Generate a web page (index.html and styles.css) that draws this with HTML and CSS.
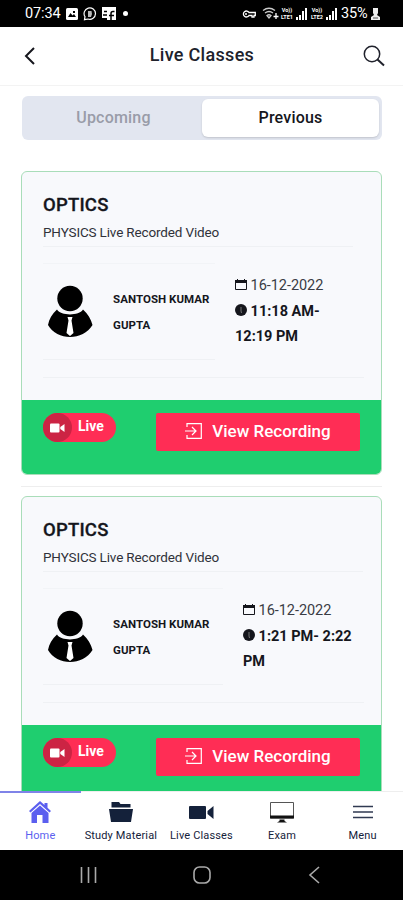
FILE: index.html
```html
<!DOCTYPE html>
<html lang="en">
<head>
    <meta charset="UTF-8">
    <meta name="viewport" content="width=device-width, initial-scale=1.0">
    <title>Live Classes</title>
    <link rel="stylesheet" href="styles.css">
</head>
<body>

    <!-- icons used more than once -->
    <svg class="sprite" width="0" height="0">
        <symbol id="person" viewBox="0 0 46 54">
            <circle cx="23" cy="13.5" r="12.7"/>
            <path d="M10 24.5C14 31 32 31 36 24.5C41 29 44 34 45.5 40C36 56 10 56 1 40C2 34 5 29 10 24.5Z"/>
            <path d="M20.5 32h5l-1 3.500 2 12.500-3.500 3-3.500-3 2-12.500z" fill="#fff"/>
        </symbol>
        <symbol id="calendar" viewBox="0 0 12 11">
            <path d="M.5 1.500h11v9H.5z" fill="none" stroke="currentColor"/>
            <path d="M0 1h12v3H0zM2 0h1v2H2zM9 0h1v2H9z"/>
        </symbol>
        <symbol id="clock" viewBox="0 0 12 12">
            <circle cx="6" cy="6" r="6"/>
            <path d="M6 3v4l.5 2" fill="none" stroke="#777"/>
        </symbol>
        <symbol id="camera" viewBox="0 0 15 10">
            <rect x="0" y="0.5" width="9.5" height="9" rx="1"/>
            <path d="M10.300 4L14.500 1v8l-4.200-3z"/>
        </symbol>
        <symbol id="enter" viewBox="0 0 17 16">
            <path d="M2 4V.7h14.300v14.600H2V12M0 8h11M7 4l4 4-4 4" fill="none" stroke="currentColor" stroke-width="1.200"/>
        </symbol>
        <symbol id="signal" viewBox="0 0 11 12">
            <path d="M0 9h2v3H0zM3 7h2v5H3zM6 3h2v9H6zM9 0h2v12H9z"/>
        </symbol>
    </svg>

    <div class="status-bar">
        <div class="status-left">
            <span class="time">07:34</span>
            <svg width="12" height="12" viewBox="0 0 12 12"><rect width="12" height="12" rx="1.5" fill="#fff"/><path d="M2 9l2.500-4 2 2.500L8 6l2 3zM7 3h2v2H7z" fill="#000"/></svg>
            <svg width="14" height="14" viewBox="0 0 14 14"><path d="M1.500 12.700l.5-3A5.700 5.700 0 1 1 5 12z" fill="none" stroke="#fff" stroke-width="1.200"/><path d="M5 4h3.500L9 7l-1 3H5z" fill="#bbb"/></svg>
            <svg width="14" height="14" viewBox="0 0 14 14"><path d="M0 0h14v13H5v-2H0z" fill="#fff"/><path d="M12.500 4.500H11Q9 4.500 9 6.500V13M7 8.500h5M2 4.500h3M1 8h4" fill="none" stroke="#000" stroke-width="1.500"/></svg>
            <span class="dot"></span>
        </div>
        <div class="status-right">
            <svg class="key" width="14" height="8" viewBox="0 0 14 8"><path d="M7 2.500A3 3 0 1 0 7 5.500h3V7h2V5.500h1.300v-3z" fill="none" stroke="#fff" stroke-width="1.300"/><circle cx="4" cy="4" r="1" fill="#fff"/></svg>
            <svg width="17" height="13" viewBox="0 0 17 13"><path d="M1 3.500Q7 -1 13 3.500M3 6Q7 3 11 6M5 8.500Q7 7 9 8.500L7 11z" fill="none" stroke="#ccc" stroke-width="1.300"/><path d="M14 6v6M11.500 9.500h5" stroke="#fff" stroke-width="1.300"/></svg>
            <span class="lte"><span>Vo))</span><span>LTE1</span></span>
            <svg class="bars" width="11" height="12"><use href="#signal"/></svg>
            <span class="lte"><span>Vo))</span><span>LTE2</span></span>
            <svg class="bars" width="11" height="12"><use href="#signal"/></svg>
            <span class="percent">35%</span>
            <svg width="9" height="12" viewBox="0 0 9 12"><path d="M2 0h5v5L6 7l3 2v3H0V9l3-2-1-2z" fill="#eee"/><path d="M2 10h5" stroke="#555"/></svg>
        </div>
    </div>

    <header>
        <svg width="12" height="18" viewBox="0 0 12 18"><path d="M10 1L2 9l8 8" fill="none" stroke="#15161c" stroke-width="2"/></svg>
        <h1>Live Classes</h1>
        <svg width="22" height="22" viewBox="0 0 22 22"><circle cx="9" cy="9" r="7.700" fill="none" stroke="#20222c" stroke-width="1.500"/><path d="M14.500 14.500l6.500 6" stroke="#20222c" stroke-width="2"/></svg>
    </header>

    <main>
        <div class="tabs">
            <button class="tab">Upcoming</button>
            <button class="tab active">Previous</button>
        </div>

        <div class="card">
            <div class="card-body">
                <h2>OPTICS</h2>
                <p class="subject">PHYSICS Live Recorded Video</p>
                <div class="details">
                    <div class="teacher">
                        <svg class="avatar" width="46" height="54"><use href="#person"/></svg>
                        <span class="name">SANTOSH KUMAR GUPTA</span>
                    </div>
                    <div class="schedule">
                        <div><svg width="12" height="11"><use href="#calendar"/></svg> <span class="date">16-12-2022</span></div>
                        <div class="hours"><svg width="12" height="12"><use href="#clock"/></svg> 11:18 AM-<br>12:19 PM</div>
                    </div>
                </div>
            </div>
            <div class="card-footer">
                <span class="live"><span class="live-icon"><svg width="15" height="10"><use href="#camera"/></svg></span>Live</span>
                <button class="view"><svg width="17" height="16"><use href="#enter"/></svg>View Recording</button>
            </div>
        </div>

        <hr>

        <div class="card">
            <div class="card-body">
                <h2>OPTICS</h2>
                <p class="subject wide">PHYSICS Live Recorded Video</p>
                <div class="details">
                    <div class="teacher wide">
                        <svg class="avatar" width="46" height="54"><use href="#person"/></svg>
                        <span class="name">SANTOSH KUMAR GUPTA</span>
                    </div>
                    <div class="schedule">
                        <div><svg width="12" height="11"><use href="#calendar"/></svg> <span class="date">16-12-2022</span></div>
                        <div class="hours"><svg width="12" height="12"><use href="#clock"/></svg> 1:21 PM- 2:22<br>PM</div>
                    </div>
                </div>
            </div>
            <div class="card-footer">
                <span class="live"><span class="live-icon"><svg width="15" height="10"><use href="#camera"/></svg></span>Live</span>
                <button class="view"><svg width="17" height="16"><use href="#enter"/></svg>View Recording</button>
            </div>
        </div>
    </main>

    <nav>
        <a class="nav-item active">
            <svg width="24" height="24" viewBox="0 0 24 24"><path d="M12 1L1 11l1.500 1.500L12 4l9.500 8.500L23 11l-3.500-3.200V3h-3v2z"/><path d="M12 5.500L3.500 13v10H9v-8h5.500v8h6V13z"/></svg>
            Home
        </a>
        <a class="nav-item">
            <svg width="24" height="24" viewBox="0 0 24 24"><path d="M2.500 2h7.500l1.500 2h10v3.500h-19z"/><path d="M0 9h24l-2 13H2z"/></svg>
            Study Material
        </a>
        <a class="nav-item">
            <svg width="25" height="24" viewBox="0 0 25 24"><rect x="0" y="6" width="17" height="13" rx="1"/><path d="M18.500 11L24.500 6v13l-6-5z"/></svg>
            Live Classes
        </a>
        <a class="nav-item">
            <svg width="26" height="24" viewBox="0 0 26 24"><path d="M1.500 2.500h23V18h-23z" fill="none" stroke="#555" stroke-width="1"/><path d="M1 15.500h24v3H1zM10.500 19.500h5v1.500l2.500 1.500H8l2.500-1.500z" fill="#111"/></svg>
            Exam
        </a>
        <a class="nav-item">
            <svg width="22" height="24" viewBox="0 0 22 24"><path d="M1 6.500h20M1 12h20M1 17.500h20" stroke="#303a52" stroke-width="1.600"/></svg>
            Menu
        </a>
    </nav>

    <div class="system-bar">
        <svg width="18" height="18" viewBox="0 0 18 18"><path d="M2.500 1v16M9.500 1v16M16.500 1v16"/></svg>
        <svg width="18" height="18" viewBox="0 0 18 18"><rect x="1" y="1" width="16" height="16" rx="5.500"/></svg>
        <svg width="18" height="18" viewBox="0 0 18 18"><path d="M13 1L4 9l9 8"/></svg>
    </div>

</body>
</html>
```
FILE: styles.css
```css
* {
    box-sizing: border-box;
}

body {
    font-family: Roboto, "Liberation Sans", sans-serif;
    background-color: #fff;
    color: #15161c;
    margin: 0;
    height: 900px;
    display: flex;
    flex-direction: column;
    overflow: hidden;
}

svg {
    fill: currentColor;
    flex-shrink: 0;
}

.sprite {
    display: none;
}

button {
    font-family: inherit;
    border: none;
    padding: 0;
}

.status-bar {
    height: 27px;
    flex-shrink: 0;
    padding: 0 23px 0 25px;
    background-color: #000;
    color: #fff;
    display: flex;
    justify-content: space-between;
    align-items: center;
}

.status-left,
.status-right {
    display: flex;
    align-items: center;
}

.status-left {
    gap: 5px;
}

.time {
    font-size: 14.5px;
    width: 36px;
    letter-spacing: -0.1px;
}

.dot {
    width: 5px;
    height: 5px;
    margin-left: 2px;
    border-radius: 50%;
    background-color: #fff;
}

.key {
    margin-right: 6px;
}

.lte {
    width: 16px;
    font-size: 5.5px;
    line-height: 7px;
    font-weight: 700;
    display: flex;
    flex-direction: column;
    align-items: center;
}

.bars {
    margin: 0 2px 0 1px;
}

.percent {
    font-size: 14.5px;
    width: 30px;
    margin-left: 2px;
    letter-spacing: -0.2px;
}

header {
    height: 59px;
    flex-shrink: 0;
    padding: 0 18px 0 24px;
    border-bottom: 1px solid #f3f3f3;
    display: flex;
    justify-content: space-between;
    align-items: center;
}

h1 {
    font-size: 18px;
    font-weight: 500;
    letter-spacing: 0.3px;
    margin: 0 0 3px 5px;
    color: #20222c;
}

main {
    flex: 1;
    min-height: 0;
    overflow: hidden;
    padding: 10px 21px 0;
}

.tabs {
    height: 44px;
    margin: 0 0 31px 1px;
    padding: 3px;
    border-radius: 6px;
    background-color: #e2e6f0;
    display: flex;
}

.tab {
    flex: 1;
    background: none;
    border-radius: 6px;
    font-size: 16px;
    font-weight: 500;
    letter-spacing: 0.2px;
    color: #999ca8;
    padding-bottom: 2px;
}

.tab.active {
    background-color: #fff;
    color: #15161c;
    box-shadow: 0 1px 2px rgba(0, 0, 0, 0.15);
}

.card {
    height: 304px;
    border-radius: 6px;
    border: 1px solid #a9ddb9;
    background-color: #f8f9fc;
    overflow: hidden;
}

.card-body {
    height: 228px;
    padding: 21px 17px 0 21px;
}

h2 {
    font-size: 18.5px;
    line-height: 24px;
    font-weight: 500;
    -webkit-text-stroke: 0.3px;
    letter-spacing: 0.2px;
    margin: 0;
}

.subject {
    width: 310px;
    height: 30px;
    margin: 0;
    padding-top: 6px;
    border-bottom: 1px solid #eff1f4;
    font-size: 13.5px;
    line-height: 18px;
    letter-spacing: -0.15px;
    color: #30323a;
}

.subject.wide {
    width: 320px;
}

.details {
    height: 131px;
    padding-top: 16px;
    border-bottom: 1px solid #eff1f4;
    display: flex;
}

.teacher {
    width: 172px;
    height: 97px;
    margin-right: 20px;
    padding-left: 4px;
    border-top: 1px solid #f2f4f7;
    border-bottom: 1px solid #eff1f4;
    display: flex;
    align-items: center;
}

.teacher.wide {
    width: 180px;
}

.avatar {
    color: #000;
    margin-right: 20px;
}

.name {
    width: 104px;
    font-size: 11.5px;
    line-height: 26px;
    font-weight: 700;
    letter-spacing: 0.05px;
}

.schedule {
    padding-top: 10px;
    font-size: 14.5px;
    line-height: 25.5px;
    white-space: nowrap;
}

.date {
    color: #3a3c44;
    letter-spacing: -0.05px;
}

.hours {
    font-weight: 700;
}

.card-footer {
    height: 76px;
    padding: 13px 21px 0;
    background-color: #1fce6f;
    display: flex;
    justify-content: space-between;
    align-items: flex-start;
}

.live {
    width: 73px;
    height: 29px;
    border-radius: 15px;
    background-color: #ff2d55;
    color: #fff;
    font-size: 14px;
    font-weight: 700;
    line-height: 27px;
    display: flex;
}

.live-icon {
    width: 29px;
    height: 29px;
    margin-right: 6px;
    border-radius: 50%;
    background-color: #cc2444;
    display: flex;
    align-items: center;
    justify-content: center;
}

.view {
    width: 204px;
    height: 38px;
    border-radius: 2px;
    background-color: #ff2d55;
    color: #fff;
    font-size: 17px;
    font-weight: 500;
    display: flex;
    align-items: center;
    justify-content: center;
    gap: 10px;
    padding-bottom: 2px;
}

hr {
    height: 1px;
    margin: 11px 0 9px;
    border: none;
    background-color: #eee;
}

nav {
    height: 59px;
    flex-shrink: 0;
    background-color: #fff;
    border-top: 1px solid #eee;
    display: flex;
}

.nav-item {
    flex: 1;
    margin-top: -1px;
    padding-top: 7px;
    border-top: 2px solid transparent;
    color: #14213a;
    font-size: 11px;
    letter-spacing: 0.15px;
    white-space: nowrap;
    display: flex;
    flex-direction: column;
    align-items: center;
    gap: 5px;
}

.nav-item.active {
    color: #5b5fef;
    border-top-color: #7f83e8;
}

.system-bar {
    height: 50px;
    flex-shrink: 0;
    padding: 0 79px;
    background-color: #000;
    display: flex;
    justify-content: space-between;
    align-items: center;
}

.system-bar svg {
    fill: none;
    stroke: #aaa;
    stroke-width: 1.6;
}
```
